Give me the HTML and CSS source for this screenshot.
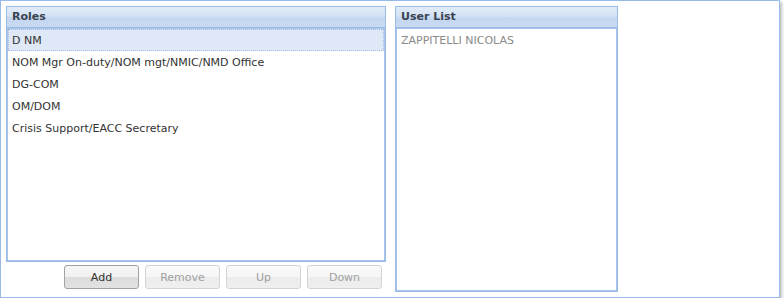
FILE: index.html
```html
<!DOCTYPE html>
<html>
<head>
<meta charset="utf-8">
<link rel="stylesheet" href="styles.css">
</head>
<body>
<div class="window">
  <div class="roles-col">
    <div class="panel roles-panel">
      <div class="panel-header">Roles</div>
      <div class="panel-body">
        <div class="row selected">D NM</div>
        <div class="row">NOM Mgr On-duty/NOM mgt/NMIC/NMD Office</div>
        <div class="row">DG-COM</div>
        <div class="row">OM/DOM</div>
        <div class="row">Crisis Support/EACC Secretary</div>
      </div>
    </div>
    <div class="btnbar">
      <button class="btn">Add</button>
      <button class="btn disabled">Remove</button>
      <button class="btn disabled">Up</button>
      <button class="btn disabled">Down</button>
    </div>
  </div>
  <div class="panel users-panel">
    <div class="panel-header">User List</div>
    <div class="panel-body">
      <div class="row user">ZAPPITELLI NICOLAS</div>
    </div>
  </div>
</div>
</body>
</html>
```

FILE: styles.css
```css
html, body {
  margin: 0;
  padding: 0;
  background: #ffffff;
}
body {
  font-family: "DejaVu Sans", sans-serif;
  font-size: 11px;
  color: #333333;
}
.window {
  box-sizing: border-box;
  width: 780px;
  height: 298px;
  border: 1px solid #99bbe8;
  background: #ffffff;
  box-shadow: 2px 2px 3px rgba(0, 0, 0, 0.25);
  padding: 5px;
  display: flex;
  gap: 9px;
  align-items: flex-start;
}
.roles-col {
  width: 380px;
  display: flex;
  flex-direction: column;
}
.panel {
  box-sizing: border-box;
  border: 1px solid #99bbe8;
  display: flex;
  flex-direction: column;
  background: #ffffff;
}
.roles-panel {
  height: 256px;
}
.users-panel {
  width: 223px;
  height: 286px;
}
.panel-header {
  height: 20px;
  line-height: 20px;
  padding-left: 5px;
  font-weight: bold;
  color: #3a4350;
  border-bottom: 1px solid #99bbe8;
  background: linear-gradient(to bottom, #e2ecf8 0%, #d3e2f5 45%, #c4d7f0 55%, #c8daf2 100%);
}
.panel-body {
  flex: 1;
  border: 1px solid #aac3e8;
  overflow: hidden;
}
.row {
  height: 22px;
  line-height: 21px;
  padding-left: 3px;
  border: 1px dotted transparent;
  box-sizing: border-box;
  white-space: nowrap;
}
.row.selected {
  background: #dfe8f6;
  border: 1px dotted #a3bae9;
}
.row.user {
  color: #8a8a8a;
}
.btnbar {
  display: flex;
  justify-content: flex-end;
  gap: 6px;
  padding: 3px 4px 0 0;
}
.btn {
  box-sizing: border-box;
  width: 75px;
  height: 24px;
  border: 1px solid #a2a2a2;
  border-radius: 3px;
  background: linear-gradient(to bottom, #f6f6f6 0%, #f1f1f1 50%, #dcdcdc 51%, #e2e2e2 100%);
  font-family: inherit;
  font-size: 11px;
  color: #333333;
  padding: 0;
}
.btn.disabled {
  border-color: #d4d4d4;
  background: linear-gradient(to bottom, #fafafa 0%, #f6f6f6 50%, #ececec 51%, #efefef 100%);
  color: #a0a0a0;
}
```
